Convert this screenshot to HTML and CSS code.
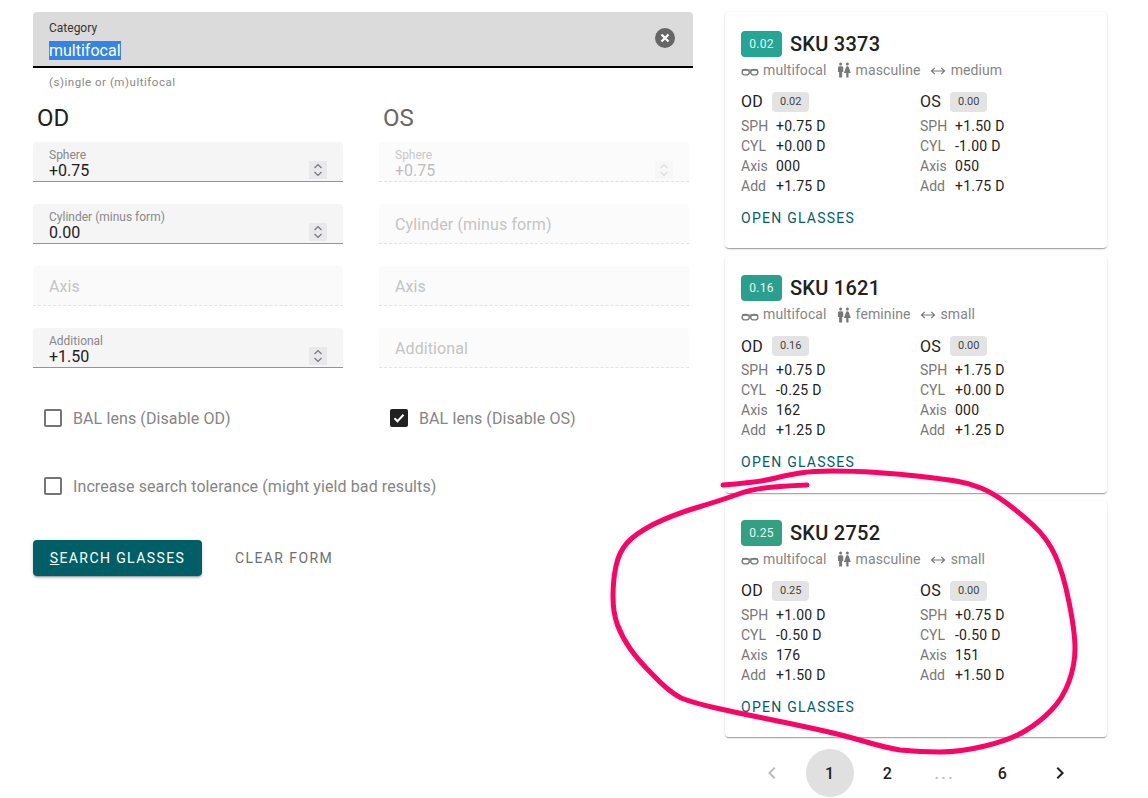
FILE: index.html
```html
<!DOCTYPE html>
<html lang="en">
<head>
<meta charset="utf-8">
<title>Search glasses</title>
<link rel="stylesheet" href="styles.css">
</head>
<body>
<svg class="defs" width="0" height="0" aria-hidden="true">
  <symbol id="i-glasses" viewBox="0 0 18 12"><ellipse cx="4.700" cy="7.200" rx="3.600" ry="2.700" fill="none" stroke="currentColor" stroke-width="1.400"/><ellipse cx="13.300" cy="7.200" rx="3.600" ry="2.700" fill="none" stroke="currentColor" stroke-width="1.400"/><path d="M1 5.100h16" fill="none" stroke="currentColor" stroke-width="1.200"/></symbol>
  <symbol id="i-people" viewBox="0 0 24 24"><path fill="currentColor" d="M7.5,2A2,2 0 0,1 9.5,4A2,2 0 0,1 7.5,6A2,2 0 0,1 5.5,4A2,2 0 0,1 7.5,2M6,7H9A2,2 0 0,1 11,9V14.5H9.5V22H5.5V14.5H4V9A2,2 0 0,1 6,7M16.5,2A2,2 0 0,1 18.5,4A2,2 0 0,1 16.5,6A2,2 0 0,1 14.5,4A2,2 0 0,1 16.5,2M15,22V16H12L14.59,8.41C14.84,7.59 15.6,7 16.5,7C17.4,7 18.16,7.59 18.41,8.41L21,16H18V22H15Z"/></symbol>
  <symbol id="i-width" viewBox="0 0 18 12"><path d="M2.500 6h13M5.800 2.900 2.500 6l3.300 3.100M12.200 2.900 15.500 6l-3.300 3.100" fill="none" stroke="currentColor" stroke-width="1.200"/></symbol>
  <symbol id="i-spin" viewBox="0 0 18 18"><path d="M5.500 7 9 3.500 12.500 7M5.500 11 9 14.500 12.500 11" fill="none" stroke="currentColor" stroke-width="1.200"/></symbol>
</svg>

<main class="page">
  <form class="form">
    <div class="category">
      <div class="category-text">
        <span class="category-label">Category</span>
        <span class="category-value"><span class="selected">multifocal</span></span>
      </div>
      <svg class="clear-icon" width="20" height="20" viewBox="0 0 20 20" aria-hidden="true"><circle cx="10" cy="10" r="10" fill="#666"/><path d="M6.500 6.500l7 7M13.500 6.500l-7 7" stroke="#fff" stroke-width="2.200"/></svg>
    </div>
    <p class="helper">(s)ingle or (m)ultifocal</p>

    <div class="eyes">
      <section class="eye">
        <h2 class="eye-title">OD</h2>
        <div class="field field-filled"><span class="field-label">Sphere</span><span class="field-value">+0.75</span><span class="spin"><svg width="18" height="18"><use href="#i-spin"/></svg></span></div>
        <div class="field field-filled"><span class="field-label">Cylinder (minus form)</span><span class="field-value">0.00</span><span class="spin"><svg width="18" height="18"><use href="#i-spin"/></svg></span></div>
        <div class="field field-empty field-axis"><span class="placeholder">Axis</span></div>
        <div class="field field-filled"><span class="field-label">Additional</span><span class="field-value">+1.50</span><span class="spin"><svg width="18" height="18"><use href="#i-spin"/></svg></span></div>
        <label class="check check-bal"><span class="box"></span><span>BAL lens (Disable OD)</span></label>
      </section>
      <section class="eye eye-off">
        <h2 class="eye-title">OS</h2>
        <div class="field field-filled field-off"><span class="field-label">Sphere</span><span class="field-value">+0.75</span><span class="spin"><svg width="18" height="18"><use href="#i-spin"/></svg></span></div>
        <div class="field field-empty field-off"><span class="placeholder">Cylinder (minus form)</span></div>
        <div class="field field-empty field-off"><span class="placeholder">Axis</span></div>
        <div class="field field-empty field-off"><span class="placeholder">Additional</span></div>
        <label class="check check-bal"><span class="box box-on"><svg width="14" height="14" viewBox="0 0 14 14"><path d="M2.500 7.200l3 3 6-6.400" fill="none" stroke="#fff" stroke-width="2"/></svg></span><span>BAL lens (Disable OS)</span></label>
      </section>
    </div>

    <label class="check check-tol"><span class="box"></span><span>Increase search tolerance (might yield bad results)</span></label>

    <div class="actions">
      <button type="button" class="btn btn-primary"><u>S</u>EARCH GLASSES</button>
      <button type="button" class="btn btn-text">CLEAR FORM</button>
    </div>
  </form>

  <aside class="results">
    <article class="card">
      <header class="card-head"><span class="score score-a">0.02</span><h3 class="sku">SKU 3373</h3></header>
      <div class="meta">
        <svg class="ic-glasses"><use href="#i-glasses"/></svg><span class="meta-text">multifocal</span>
        <svg class="ic-people"><use href="#i-people"/></svg><span class="meta-text">masculine</span>
        <svg class="ic-width"><use href="#i-width"/></svg><span>medium</span>
      </div>
      <div class="eyes-data">
        <div><div class="eye-head"><span class="eye-name">OD</span><span class="chip">0.02</span></div>
          <dl class="rows"><dt>SPH</dt><dd>+0.75 D</dd><dt>CYL</dt><dd>+0.00 D</dd><dt>Axis</dt><dd>000</dd><dt>Add</dt><dd>+1.75 D</dd></dl></div>
        <div><div class="eye-head"><span class="eye-name">OS</span><span class="chip">0.00</span></div>
          <dl class="rows"><dt>SPH</dt><dd>+1.50 D</dd><dt>CYL</dt><dd>-1.00 D</dd><dt>Axis</dt><dd>050</dd><dt>Add</dt><dd>+1.75 D</dd></dl></div>
      </div>
      <a class="open">OPEN GLASSES</a>
    </article>

    <article class="card">
      <header class="card-head"><span class="score score-b">0.16</span><h3 class="sku">SKU 1621</h3></header>
      <div class="meta">
        <svg class="ic-glasses"><use href="#i-glasses"/></svg><span class="meta-text">multifocal</span>
        <svg class="ic-people"><use href="#i-people"/></svg><span class="meta-text">feminine</span>
        <svg class="ic-width"><use href="#i-width"/></svg><span>small</span>
      </div>
      <div class="eyes-data">
        <div><div class="eye-head"><span class="eye-name">OD</span><span class="chip">0.16</span></div>
          <dl class="rows"><dt>SPH</dt><dd>+0.75 D</dd><dt>CYL</dt><dd>-0.25 D</dd><dt>Axis</dt><dd>162</dd><dt>Add</dt><dd>+1.25 D</dd></dl></div>
        <div><div class="eye-head"><span class="eye-name">OS</span><span class="chip">0.00</span></div>
          <dl class="rows"><dt>SPH</dt><dd>+1.75 D</dd><dt>CYL</dt><dd>+0.00 D</dd><dt>Axis</dt><dd>000</dd><dt>Add</dt><dd>+1.25 D</dd></dl></div>
      </div>
      <a class="open">OPEN GLASSES</a>
    </article>

    <article class="card">
      <header class="card-head"><span class="score score-c">0.25</span><h3 class="sku">SKU 2752</h3></header>
      <div class="meta">
        <svg class="ic-glasses"><use href="#i-glasses"/></svg><span class="meta-text">multifocal</span>
        <svg class="ic-people"><use href="#i-people"/></svg><span class="meta-text">masculine</span>
        <svg class="ic-width"><use href="#i-width"/></svg><span>small</span>
      </div>
      <div class="eyes-data">
        <div><div class="eye-head"><span class="eye-name">OD</span><span class="chip">0.25</span></div>
          <dl class="rows"><dt>SPH</dt><dd>+1.00 D</dd><dt>CYL</dt><dd>-0.50 D</dd><dt>Axis</dt><dd>176</dd><dt>Add</dt><dd>+1.50 D</dd></dl></div>
        <div><div class="eye-head"><span class="eye-name">OS</span><span class="chip">0.00</span></div>
          <dl class="rows"><dt>SPH</dt><dd>+0.75 D</dd><dt>CYL</dt><dd>-0.50 D</dd><dt>Axis</dt><dd>151</dd><dt>Add</dt><dd>+1.50 D</dd></dl></div>
      </div>
      <a class="open">OPEN GLASSES</a>
    </article>

    <nav class="pager">
      <span class="pg pg-off"><svg width="24" height="24" viewBox="0 0 24 24"><path d="M15.410 7.410 14 6l-6 6 6 6 1.410-1.410L10.830 12z" fill="currentColor"/></svg></span>
      <span class="pg pg-on">1</span>
      <span class="pg">2</span>
      <span class="pg pg-off pg-dots">...</span>
      <span class="pg">6</span>
      <span class="pg"><svg width="24" height="24" viewBox="0 0 24 24"><path d="M10 6 8.590 7.410 13.170 12l-4.580 4.590L10 18l6-6z" fill="currentColor"/></svg></span>
    </nav>
  </aside>
</main>

<svg class="scribble" width="1148" height="798" viewBox="0 0 1148 798" aria-hidden="true">
  <path d="M723 485 Q760 482 773.500 478.500 Q787 475 800 473 Q813 471 833 471 Q853 471 876.500 472.500 Q900 474 921.500 476.500 Q943 479 956 481 Q969 483 981 488 Q993 493 1006.500 503 Q1020 513 1033.500 525.500 Q1047 538 1055 555 Q1063 572 1069 602 Q1075 632 1075 648.500 Q1075 665 1069 681.500 Q1063 698 1051.500 710 Q1040 722 1025 731 Q1010 740 985 746 Q960 752 940 752 Q920 752 900 750 Q883 747 863 741 Q843 735 815.500 729 Q788 723 763 718 Q738 713 716 708 Q694 703 681 698 Q668 691 653 675 Q638 660 630 648.500 Q622 637 617.500 625 Q613 613 613 596.500 Q613 580 616 566 Q619 552 627 543 Q635 534 653 524.500 Q672 515 697 507.500 Q722 500 738.500 494 Q755 488 780 486.500 Q793 485.500 807 485"/>
</svg>
</body>
</html>
```

FILE: styles.css
```css
* { box-sizing: border-box; }
html, body { margin: 0; padding: 0; height: 100%; background: #fff; overflow: hidden; }
body { font-family: Roboto, "Liberation Sans", sans-serif; color: #212121; position: relative; }
.defs { position: absolute; }

.page { display: flex; align-items: flex-start; padding: 12px 0 0 33px; gap: 32px; }
.form { width: 660px; flex: none; }

.category { height: 56px; background: #dbdbdb; border-bottom: 2px solid #000; border-radius: 4px 4px 0 0; padding: 0 18px 0 16px; display: flex; align-items: center; justify-content: space-between; }
.category-text { display: flex; flex-direction: column; padding-top: 2px; }
.category-label { font-size: 12px; line-height: 14px; color: #333; }
.category-value { font-size: 16px; line-height: 19px; margin-top: 6px; }
.selected { background: #3584e4; color: #fff; display: inline-block; }
.clear-icon { margin-bottom: 2px; }
.helper { margin: 7px 0 0 16px; font-size: 11.500px; line-height: 14px; letter-spacing: .53px; color: #888; }

.eyes { display: flex; gap: 36px; margin-top: 11px; }
.eye { width: 310px; display: flex; flex-direction: column; gap: 22px; }
.eye-title { margin: 0 0 -16px 4px; font-size: 24px; line-height: 36px; font-weight: 400; color: #212121; }
.eye-off .eye-title { color: #666; }

.field { height: 40px; background: #f5f5f5; border-bottom: 1px solid #949494; border-radius: 4px 4px 0 0; padding: 0 16px; position: relative; display: flex; flex-direction: column; justify-content: flex-end; }
.field-label { font-size: 12px; line-height: 14px; color: #888; }
.field-value { font-size: 16px; line-height: 19px; margin-top: -1px; margin-bottom: 1px; color: #212121; }
.spin { position: absolute; right: 16px; top: 19px; width: 18px; height: 18px; background: #e9e9ed; color: #777; display: flex; }
.field-empty { justify-content: center; padding-top: 2px; background: #fafafa; border-bottom: 1px dashed #e3e3e3; }
.field-axis { background: #fafafa; }
.placeholder { font-size: 16px; letter-spacing: .1px; color: #c4c4c4; }
.field-off { background: #fbfbfb; border-bottom: 1px dashed #e3e3e3; }
.field-off .field-label { color: #c8c8c8; }
.field-off .field-value { color: #bdbdbd; }
.field-off .spin { background: #f7f7f7; color: #dcdcdc; }

.check { display: flex; align-items: center; gap: 11px; height: 24px; padding-left: 11px; font-size: 16px; letter-spacing: .1px; color: #858585; }
.check-bal { margin-top: 16px; }
.check-tol { margin-top: 44px; }
.box { width: 18px; height: 18px; border: 2px solid #757575; border-radius: 2px; flex: none; }
.box-on { background: #212121; border-color: #212121; display: flex; align-items: center; justify-content: center; }

.actions { display: flex; align-items: center; gap: 17px; margin-top: 42px; }
.btn { height: 36px; border: 0; border-radius: 4px; padding: 0 16px; font: 400 14px/36px Roboto, "Liberation Sans", sans-serif; letter-spacing: 1.400px; }
.btn-primary { background: #005f66; color: #fff; width: 169px; box-shadow: 0 3px 1px -2px rgba(0,0,0,.2), 0 2px 2px rgba(0,0,0,.14), 0 1px 5px rgba(0,0,0,.12); }
.btn-text { background: transparent; color: #6f6f6f; }

.results { width: 382px; flex: none; }
.card { height: 236.400px; margin-bottom: 8px; background: #fff; border-radius: 4px; padding: 18.600px 16px 0; box-shadow: 0 2px 1px -1px rgba(0,0,0,.2), 0 1px 1px rgba(0,0,0,.14), 0 1px 3px rgba(0,0,0,.12); }
.card-head { display: flex; align-items: center; gap: 8px; height: 26.400px; }
.score { width: 41px; height: 26px; border-radius: 4px; color: #e8f6f3; font-size: 12px; line-height: 26px; text-align: center; letter-spacing: .3px; }
.score-a { background: #25a594; }
.score-b { background: #2b9f8e; }
.score-c { background: #34a083; }
.sku { margin: 0; font-size: 20px; line-height: 26px; font-weight: 500; letter-spacing: .25px; color: #212121; }

.meta { display: flex; align-items: center; height: 20px; margin-top: 3px; font-size: 14px; letter-spacing: .1px; color: #858585; }
.meta svg { flex: none; color: #777; }
.ic-glasses { width: 18px; height: 12px; margin-right: 4px; margin-top: 3px; }
.ic-people { width: 18px; height: 18px; margin-right: 3px; margin-top: 1px; }
.ic-width { width: 18px; height: 12px; margin-right: 4px; margin-top: 2px; }
.meta-text { margin-right: 8px; }

.eyes-data { display: grid; grid-template-columns: 179px 1fr; margin-top: 12px; }
.eye-head { display: flex; align-items: center; height: 20px; }
.eye-name { font-size: 16px; line-height: 20px; padding-top: 1px; letter-spacing: .25px; color: #212121; margin-right: 9px; }
.chip { height: 20px; padding: 0 8px; background: #e3e3e3; border-radius: 4px; font-size: 11px; line-height: 20px; color: #444; }
.rows { display: grid; grid-template-columns: 35px 1fr; margin: 4px 0 0; font-size: 14px; line-height: 20px; }
.rows dt { color: #777; }
.rows dd { margin: 0; letter-spacing: .25px; color: #212121; }
.open { display: block; margin-top: 12px; font-size: 14px; line-height: 20px; font-weight: 400; letter-spacing: 1.250px; color: #00606a; }

.pager { display: flex; justify-content: center; margin-top: 12px; }
.pg { width: 48px; height: 48px; margin: 0 4.800px; border-radius: 50%; display: flex; align-items: center; justify-content: center; font-size: 16px; font-weight: 500; color: #212121; }
.pg-on { background: #e0e0e0; }
.pg-off { color: #bdbdbd; }
.pg-dots { letter-spacing: 2.500px; }

.scribble { position: absolute; left: 0; top: 0; pointer-events: none; }
.scribble path { fill: none; stroke: #fd0365; stroke-width: 5; stroke-linecap: round; stroke-linejoin: round; }
```
